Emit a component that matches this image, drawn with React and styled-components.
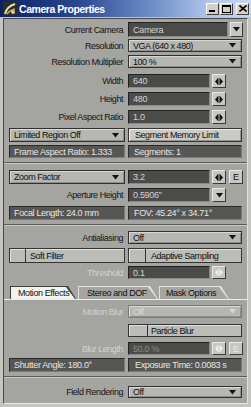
import React from 'react';
import styled, { createGlobalStyle } from 'styled-components';

const Global = createGlobalStyle`
  html, body { margin: 0; padding: 0; background: #bdbdb9; }
  body { width: 251px; height: 407px; overflow: hidden; font-family: "Liberation Sans", Arial, sans-serif; }
  * { box-sizing: border-box; }
`;

const Window = styled.div`
  width: 251px;
  height: 407px;
  background: #c4c4c0;
  display: flex;
  flex-direction: column;
  padding: 0 3px 3px 3px;
`;

const TitleBar = styled.div`
  height: 17px;
  margin: 0 -3px 1px -3px;
  display: flex;
  align-items: center;
  padding: 0 2px 0 3px;
  background: linear-gradient(90deg, #0c2264 0%, #2a468e 30%, #6d8cc6 60%, #b4c8ec 85%, #c8d6f0 100%);
`;

const TitleText = styled.div`
  color: #fff;
  font-weight: bold;
  font-size: 10.5px;
  letter-spacing: -0.45px;
  margin-left: 2px;
  flex: 1;
`;

const CapButtons = styled.div`
  display: flex;
  gap: 1px;
`;

const CapButton = styled.div`
  width: 13px;
  height: 12px;
  margin-left: ${p => p.$gap || 0}px;
  background: #d4d0c8;
  border: 1px solid;
  border-color: #ffffff #404040 #404040 #ffffff;
  display: flex;
  align-items: center;
  justify-content: center;
`;

const Body = styled.div`
  flex: 1;
  background: #a4a4a0;
  border: 1px solid;
  border-color: #4a4a48 #e0e0dc #e8e8e4 #4a4a48;
  padding: 2px 4px 0 5px;
  display: flex;
  flex-direction: column;
`;

const Row = styled.div`
  display: grid;
  grid-template-columns: 116px 114px;
  column-gap: 3px;
  height: ${p => p.$h}px;
  margin-top: ${p => p.$mt}px;
`;

const Label = styled.div`
  display: flex;
  align-items: center;
  justify-content: flex-end;
  padding-right: 2px;
  color: ${p => (p.$disabled ? '#d2d2ce' : '#141414')};
  font-size: 9px;
  letter-spacing: -0.45px;
  white-space: nowrap;
`;

const Controls = styled.div`
  display: flex;
  gap: 2px;
  min-width: 0;
`;

const Field = styled.div`
  width: ${p => (p.$w ? `${p.$w}px` : 'auto')};
  flex: ${p => (p.$w ? '0 0 auto' : '1')};
  background: #4b4b4a;
  border: 1px solid;
  border-color: #222 #8a8a86 #8a8a86 #222;
  color: ${p => (p.$disabled ? '#8c8c8a' : '#d4d4d0')};
  font-size: 9px;
  letter-spacing: -0.3px;
  display: flex;
  align-items: center;
  padding-left: 4px;
  white-space: nowrap;
`;

const Popup = styled.div`
  width: 100%;
  background: #b6b6b2;
  border: 1px solid ${p => (p.$disabled ? '#7a7a78' : '#303030')};
  box-shadow: inset 1px 1px #d8d8d4, inset -1px -1px #8e8e8a;
  color: ${p => (p.$disabled ? '#d6d6d2' : '#111')};
  font-size: 9px;
  letter-spacing: -0.45px;
  display: flex;
  align-items: center;
  justify-content: space-between;
  padding: 0 5px 0 4px;
  white-space: nowrap;
`;

const SmallButton = styled.div`
  width: ${p => p.$w || 14}px;
  flex: 0 0 auto;
  margin-left: ${p => p.$ml || 0}px;
  background: #c6c6c2;
  border: 1px solid;
  border-color: #e8e8e4 #3a3a38 #3a3a38 #e8e8e4;
  display: flex;
  align-items: center;
  justify-content: center;
  color: ${p => (p.$disabled ? '#e6e6e2' : '#111')};
  font-size: 9px;
`;

const Info = styled.div`
  background: #565654;
  border: 1px solid;
  border-color: #2a2a28 #7c7c78 #7c7c78 #2a2a28;
  color: #e6e6e2;
  font-size: 9px;
  letter-spacing: -0.35px;
  display: flex;
  align-items: center;
  padding-left: ${p => p.$pl || 4}px;
  white-space: nowrap;
`;

const Button = styled.div`
  background: #cacac6;
  border: 1px solid #343432;
  box-shadow: inset 1px 1px #ececE8, inset -1px -1px #94948f;
  color: #111;
  font-size: 9px;
  letter-spacing: -0.45px;
  display: flex;
  align-items: center;
  padding-left: 6px;
  white-space: nowrap;
`;

const Toggle = styled.div`
  background: #bcbcb8;
  border: 1px solid #343432;
  box-shadow: inset 1px 1px #e0e0dc;
  display: flex;
  align-items: stretch;
  color: #111;
  font-size: 9px;
  letter-spacing: -0.45px;
`;

const ToggleBox = styled.div`
  width: ${p => p.$w}px;
  border-right: 1px solid #343432;
  flex: 0 0 auto;
`;

const ToggleText = styled.div`
  display: flex;
  align-items: center;
  padding-left: ${p => p.$pl}px;
  white-space: nowrap;
`;

const Separator = styled.div`
  height: 2px;
  margin: ${p => p.$mt}px -4px 0 -5px;
  border-top: 1px solid #5a5a58;
  border-bottom: 1px solid #c8c8c4;
`;

const TabStrip = styled.div`
  margin: 7px -4px 0 -5px;
  padding-left: 6px;
  height: 14px;
  display: flex;
  align-items: flex-end;
  gap: 2px;
  border-bottom: 1px solid #ececE8;
`;

const TabOuter = styled.div`
  width: ${p => p.$w}px;
  height: 13px;
  margin-left: ${p => p.$ml || 0}px;
  background: ${p => (p.$active ? '#3c3c3a' : '#e2e2de')};
  clip-path: polygon(0 0, calc(100% - 8px) 0, 100% 100%, 0 100%);
  padding: 1px 1px 0 1px;
`;

const TabFace = styled.div`
  height: 100%;
  background: ${p => (p.$active ? '#f2f2ee' : '#a4a4a0')};
  clip-path: polygon(0 0, calc(100% - 9px) 0, 100% 100%, 0 100%);
  color: #111;
  font-size: 9px;
  letter-spacing: -0.4px;
  display: flex;
  align-items: center;
  padding-left: ${p => p.$pl}px;
  white-space: nowrap;
`;

const Spacer = styled.div`
  flex: 1;
`;

const DownArrow = ({ color = '#111' }) => (
  <svg width="7" height="5" viewBox="0 0 7 5">
    <polygon points="0,0 7,0 3.5,4.5" fill={color} />
  </svg>
);

const SlideIcon = ({ color = '#111' }) => (
  <svg width="8" height="7" viewBox="0 0 8 7">
    <polygon points="3,0 0,3.5 3,7" fill={color} />
    <rect x="3.5" y="0" width="1" height="7" fill={color} />
    <polygon points="5,0 8,3.5 5,7" fill={color} />
  </svg>
);

const AppIcon = () => (
  <svg width="14" height="14" viewBox="0 0 14 14">
    <rect width="14" height="14" fill="#2c2c28" />
    <path d="M2 12 C3 7 6 4 12 2" stroke="#e8e0b0" strokeWidth="2" fill="none" />
    <path d="M4 12 C6 9 8 8 12 7" stroke="#c8b060" strokeWidth="1.5" fill="none" />
    <circle cx="10" cy="10" r="2" fill="#d8d0a0" />
  </svg>
);

const App = () => (
  <>
    <Global />
    <Window>
      <TitleBar>
        <AppIcon />
        <TitleText>Camera Properties</TitleText>
        <CapButtons>
          <CapButton>
            <svg width="7" height="7" viewBox="0 0 7 7"><rect x="0" y="5" width="6" height="2" fill="#000" /></svg>
          </CapButton>
          <CapButton>
            <svg width="9" height="8" viewBox="0 0 9 8"><rect x="0.5" y="0.5" width="8" height="7" fill="none" stroke="#000" /><rect x="0" y="0" width="9" height="2" fill="#000" /></svg>
          </CapButton>
          <CapButton $gap={2}>
            <svg width="8" height="7" viewBox="0 0 8 7"><path d="M0.5 0.5 L7.5 6.5 M7.5 0.5 L0.5 6.5" stroke="#000" strokeWidth="1.6" /></svg>
          </CapButton>
        </CapButtons>
      </TitleBar>
      <Body>
        <Row $mt={1} $h={15}>
          <Label>Current Camera</Label>
          <Controls>
            <Field $w={100}>Camera</Field>
            <SmallButton $w={13}><DownArrow /></SmallButton>
          </Controls>
        </Row>
        <Row $mt={2} $h={13}>
          <Label>Resolution</Label>
          <Popup>VGA (640 x 480)<DownArrow /></Popup>
        </Row>
        <Row $mt={3} $h={13}>
          <Label>Resolution Multiplier</Label>
          <Popup>100 %<DownArrow /></Popup>
        </Row>
        <Row $mt={6} $h={14}>
          <Label>Width</Label>
          <Controls>
            <Field $w={82}>640</Field>
            <SmallButton><SlideIcon /></SmallButton>
          </Controls>
        </Row>
        <Row $mt={4} $h={14}>
          <Label>Height</Label>
          <Controls>
            <Field $w={82}>480</Field>
            <SmallButton><SlideIcon /></SmallButton>
          </Controls>
        </Row>
        <Row $mt={4} $h={14}>
          <Label>Pixel Aspect Ratio</Label>
          <Controls>
            <Field $w={82}>1.0</Field>
            <SmallButton><SlideIcon /></SmallButton>
          </Controls>
        </Row>
        <Row $mt={4} $h={14}>
          <Popup>Limited Region Off<DownArrow /></Popup>
          <Button>Segment Memory Limit</Button>
        </Row>
        <Row $mt={3} $h={13}>
          <Info>Frame Aspect Ratio: 1.333</Info>
          <Info $pl={5}>Segments: 1</Info>
        </Row>
        <Separator $mt={4} />
        <Row $mt={6} $h={14}>
          <Popup>Zoom Factor<DownArrow /></Popup>
          <Controls>
            <Field $w={82}>3.2</Field>
            <SmallButton><SlideIcon /></SmallButton>
            <SmallButton $ml={1}>E</SmallButton>
          </Controls>
        </Row>
        <Row $mt={4} $h={14}>
          <Label>Aperture Height</Label>
          <Controls>
            <Field $w={82}>0.5906"</Field>
            <SmallButton><DownArrow /></SmallButton>
          </Controls>
        </Row>
        <Row $mt={4} $h={14}>
          <Info>Focal Length: 24.0 mm</Info>
          <Info $pl={5}>FOV: 45.24° x 34.71°</Info>
        </Row>
        <Separator $mt={4} />
        <Row $mt={5} $h={13}>
          <Label>Antialiasing</Label>
          <Popup>Off<DownArrow /></Popup>
        </Row>
        <Row $mt={4} $h={15}>
          <Toggle>
            <ToggleBox $w={16} />
            <ToggleText $pl={4}>Soft Filter</ToggleText>
          </Toggle>
          <Toggle>
            <ToggleBox $w={17} />
            <ToggleText $pl={5}>Adaptive Sampling</ToggleText>
          </Toggle>
        </Row>
        <Row $mt={3} $h={13}>
          <Label $disabled>Threshold</Label>
          <Controls>
            <Field $w={82}>0.1</Field>
            <SmallButton $disabled><SlideIcon color="#eeeeea" /></SmallButton>
          </Controls>
        </Row>
        <TabStrip>
          <TabOuter $w={66} $active>
            <TabFace $active $pl={7}>Motion Effects</TabFace>
          </TabOuter>
          <TabOuter $w={80}>
            <TabFace $pl={8}>Stereo and DOF</TabFace>
          </TabOuter>
          <TabOuter $w={70} $ml={-1}>
            <TabFace $pl={6}>Mask Options</TabFace>
          </TabOuter>
        </TabStrip>
        <Row $mt={5} $h={13}>
          <Label $disabled>Motion Blur</Label>
          <Popup $disabled>Off<DownArrow color="#d6d6d2" /></Popup>
        </Row>
        <Row $mt={6} $h={13}>
          <Spacer />
          <Toggle>
            <ToggleBox $w={19} />
            <ToggleText $pl={3}>Particle Blur</ToggleText>
          </Toggle>
        </Row>
        <Row $mt={5} $h={13}>
          <Label $disabled>Blur Length</Label>
          <Controls>
            <Field $w={82} $disabled>50.0 %</Field>
            <SmallButton $disabled><SlideIcon color="#eeeeea" /></SmallButton>
            <SmallButton $disabled $ml={1}>E</SmallButton>
          </Controls>
        </Row>
        <Row $mt={3} $h={14}>
          <Info>Shutter Angle: 180.0°</Info>
          <Info $pl={6}>Exposure Time: 0.0083 s</Info>
        </Row>
        <Separator $mt={4} />
        <Row $mt={8} $h={12}>
          <Label>Field Rendering</Label>
          <Popup>Off<DownArrow /></Popup>
        </Row>
      </Body>
    </Window>
  </>
);

export default App;
